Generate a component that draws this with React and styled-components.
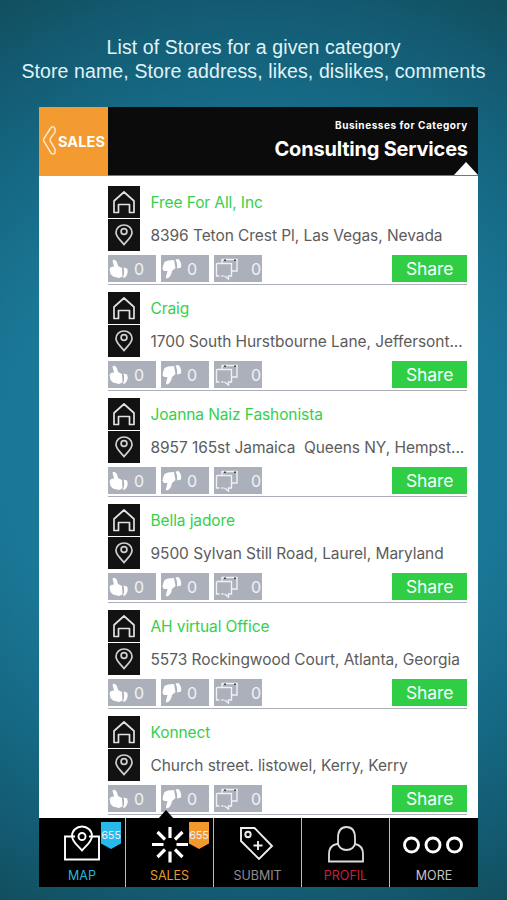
import React from "react";
import styled, { createGlobalStyle } from "styled-components";

const GlobalStyle = createGlobalStyle`
  * { box-sizing: border-box; }
  body { margin: 0; background: #125066; }
`;

const Page = styled.main`
  width: 507px;
  height: 900px;
  overflow: hidden;
  display: flex;
  flex-direction: column;
  align-items: flex-start;
  padding: 35px 0 0 39px;
  background: radial-gradient(circle at 50% 50%, #1b80a0 0px, #1a7897 250px, #166a86 350px, #135a71 450px, #124e5d 520px);
  font-family: Inter, sans-serif;
`;

const Caption = styled.h1`
  width: 507px;
  height: 72px;
  flex: none;
  margin: 0 0 0 -39px;
  color: #e0f3f8;
  font: 400 19.5px/24px "Liberation Sans", sans-serif;
  text-align: center;
`;

const CaptionLine = styled.span`
  display: block;
  white-space: nowrap;
  letter-spacing: ${(p) => p.$spacing}px;
`;

const Phone = styled.section`
  width: 439.400px;
  height: 780px;
  flex: none;
  display: flex;
  flex-direction: column;
  background: #fff;
`;

const Header = styled.header`
  position: relative;
  display: flex;
  height: 69px;
  flex: none;
  background: #0b0b0b;
  border-bottom: 1px solid #777;
`;

const Back = styled.button`
  width: 69px;
  height: 69px;
  display: flex;
  align-items: center;
  gap: 1px;
  padding: 0 0 0 4px;
  border: 0;
  color: #fff;
  background: #f39b30;
  font: 700 14.5px Inter, sans-serif;
  letter-spacing: 0.1px;
`;

const Titles = styled.div`
  flex: 1;
  padding: 11px 10.5px 0 0;
  text-align: right;
  color: #fff;
`;

const Eyebrow = styled.div`
  font-size: 10px;
  line-height: 14px;
  font-weight: 650;
  letter-spacing: 0.55px;
`;

const Title = styled.div`
  margin-top: 5px;
  font-size: 20px;
  line-height: 24px;
  font-weight: 650;
  letter-spacing: -0.2px;
`;

const Notch = styled.svg`
  position: absolute;
  right: 0;
  bottom: 0;
`;

const List = styled.div`
  flex: 1;
  padding: 10px 11px 0 69px;
  min-height: 0;
  overflow: hidden;
`;

const Store = styled.article`
  height: 99px;
  margin-bottom: 7px;
  border-bottom: 1px solid #acafb7;
`;

const Line = styled.div`
  display: flex;
  align-items: center;
  gap: 10.5px;
  height: 32px;
  margin-bottom: 1px;
`;

const Tile = styled.span`
  width: 32px;
  height: 32px;
  flex: none;
  background: #121212;
  display: grid;
  place-items: center;
`;

const Label = styled.span`
  padding-top: 2px;
  font-size: 15.5px;
  line-height: 22px;
  white-space: pre;
  color: ${(p) => (p.$name ? "#35d04b" : "#5c5c5c")};
  letter-spacing: ${(p) => (p.$name ? -0.1 : -0.065)}px;
`;

const Actions = styled.div`
  display: flex;
  gap: 5px;
  margin-top: 4px;
  height: 27px;
`;

const Stat = styled.span`
  width: 48px;
  display: flex;
  align-items: center;
  justify-content: space-between;
  padding-right: ${(p) => p.$end}px;
  background: #acb0ba;
  color: #f2f3f6;
  font-size: 16px;
`;

const Share = styled.button`
  width: 74.500px;
  margin-left: auto;
  margin-right: 0.500px;
  border: 0;
  padding: 0;
  background: #2fce44;
  color: #fff;
  font: 400 17.5px/27px Inter, sans-serif;
  letter-spacing: -0.1px;
`;

const Tabs = styled.nav`
  flex: none;
  height: 69px;
  display: flex;
  background: #000;
`;

const Tab = styled.div`
  position: relative;
  width: ${(p) => p.$width || 88}px;
  display: flex;
  flex-direction: column;
  align-items: center;
  padding-top: 6px;
  color: ${(p) => p.$color};
  border-right: ${(p) => (p.$last ? 0 : 1)}px solid #bbb;
  font-size: 12.5px;
  line-height: 16px;
`;

const TabIcon = styled.svg`
  flex: none;
  margin-bottom: 2px;
`;

const Dots = styled(TabIcon)`
  margin-right: 3px;
`;

const Badge = styled.span`
  position: absolute;
  top: 4px;
  right: 4px;
  width: 20px;
  height: 27px;
  padding-top: 6px;
  text-align: center;
  color: #e9f2f4;
  background: ${(p) => p.$color};
  clip-path: polygon(0 0, 100% 0, 100% 80%, 50% 100%, 0 80%);
  font-size: 11px;
  line-height: 15px;
  letter-spacing: -0.2px;
`;

const Pointer = styled.svg`
  position: absolute;
  top: -8px;
  left: 32px;
`;

const House = () => (
  <svg width="24" height="24" viewBox="0 0 24 24" fill="none" stroke="#e2e2e2" strokeWidth="1.700" strokeLinejoin="round">
    <path d="M2 11 12 2l10 9V22.500h-4.500V14.500H6.500V22.500H2Z" />
  </svg>
);

const Pin = () => (
  <svg width="18" height="22" viewBox="0 0 18 22" fill="none" stroke="#d0d0d0" strokeWidth="1.700">
    <path d="M9 20.500C6 16.500 1 13 1 8.500a8 7.500 0 0 1 16 0C17 13 12 16.500 9 20.500Z" />
    <circle cx="9" cy="7.500" r="2.900" />
  </svg>
);

const ThumbUp = () => (
  <svg width="22" height="22" viewBox="0 0 22 22" fill="#fff">
    <path d="M4.500 2.500C6 .5 8.500 2.500 9 4.500L10 8l4 2 .5 8.500L11 20 5 18.500 2.500 16 1.500 11 3 9l3-.5Z" />
    <path d="m15.500 9.500 3.500 1c1.500 3 .5 6.500-2 9l-2 .5c1.500-4 1.500-7 .5-10.500Z" />
  </svg>
);

const ThumbDown = () => (
  <svg width="22" height="22" viewBox="0 0 22 22" fill="#fff">
    <path d="M2 8 3.500 4 7 2.500l6-.5 1.500 8L11 13c-.5 3.500-2 6.500-5 7.500-2-.5-.5-3 0-5.500l.5-2H3L1.500 11Z" />
    <path d="m14.500 1.500 3-.5c2.500 2.500 3 5.500 2.500 8.500l-4 1c.5-3 0-6-1.500-9Z" />
  </svg>
);

const Comments = () => (
  <svg width="26" height="24" viewBox="0 0 26 24" fill="none" stroke="#f0f1f4" strokeWidth="1.400">
    <path d="M8 6V2.500h15v11.500H18" />
    <path d="M2.500 6.500h15v12.500h-3v3l-4-3" />
    <path d="M2.500 6.500v12.500h3m2 0h2" />
    <path d="M10 3.300h2m8 0h2" stroke="#444" />
  </svg>
);

const icons = {
  map: <><path d="M14 12.500H4v23h34v-23H28" /><path d="M21 26.500c-4-5-10-8.500-10-14.500a10 9.500 0 0 1 20 0c0 6-6 9.500-10 14.500Z" /><circle cx="21" cy="12.500" r="3.500" /></>,
  sales: <path d="M21 3v11M21 27.500v11M3 20.500h11.500M27.500 20.500H39M8.500 8l7.500 7.500M26 25.500l7.500 7.500M33.500 8 26 15.500M16 25.500 8.500 33" />,
  submit: <><path d="M4 4h13.500L35 22 22 35 4 17Z" /><circle cx="11" cy="10.500" r="2.700" /><path d="M21 17v9M16.500 21.500h9" /></>,
  profil: <><path d="M13 20H12c-5 1-8 4.500-8 10v7.500h34V30c0-5.500-3-9-8-10h-1" /><path d="M13 14c0-7 3-11 8.500-11S30 7 30 14v5c0 4-4 7-8.500 7S13 23 13 19Z" /></>,
};

const stores = [
  ["Free For All, Inc", "8396 Teton Crest Pl, Las Vegas, Nevada"],
  ["Craig", "1700 South Hurstbourne Lane, Jeffersont..."],
  ["Joanna Naiz Fashonista", "8957 165st Jamaica  Queens NY, Hempst..."],
  ["Bella jadore", "9500 Sylvan Still Road, Laurel, Maryland"],
  ["AH virtual Office", "5573 Rockingwood Court, Atlanta, Georgia"],
  ["Konnect", "Church street. listowel, Kerry, Kerry"],
];

export default function App() {
  return (
    <Page>
      <GlobalStyle />
      <Caption>
        <CaptionLine $spacing={0.1}>List of Stores for a given category</CaptionLine>
        <CaptionLine $spacing={0.11}>Store name, Store address, likes, dislikes, comments</CaptionLine>
      </Caption>
      <Phone>
        <Header>
          <Back>
            <svg width="14" height="32" viewBox="0 0 14 32" fill="none" stroke="#ffe5c4" strokeWidth="1.500">
              <path d="M8 1.500 1 12.500q-.8 1.500 0 3l7 11.500q2 2 4 0V23L7.500 15.500q-.8-1.500 0-3L12 6V2.500Q10.500-.5 8 1.500Z" />
            </svg>
            SALES
          </Back>
          <Titles>
            <Eyebrow>Businesses for Category</Eyebrow>
            <Title>Consulting Services</Title>
          </Titles>
          <Notch width="24" height="13" viewBox="0 0 24 13"><path d="M0 13 12 0l12 13Z" fill="#fff" /></Notch>
        </Header>
        <List>
          {stores.map(([name, address]) => (
            <Store key={name}>
              <Line><Tile><House /></Tile><Label $name>{name}</Label></Line>
              <Line><Tile><Pin /></Tile><Label>{address}</Label></Line>
              <Actions>
                <Stat $end={12}><ThumbUp />0</Stat>
                <Stat $end={12}><ThumbDown />0</Stat>
                <Stat $end={1}><Comments />0</Stat>
                <Share>Share</Share>
              </Actions>
            </Store>
          ))}
        </List>
        <Tabs>
          <Tab $width={87} $color="#28b5dc"><TabIcon width="42" height="42" fill="none" stroke="#fff" strokeWidth="1.900">{icons.map}</TabIcon>MAP<Badge $color="#27b8ec">655</Badge></Tab>
          <Tab $color="#e99a28"><Pointer width="16" height="9"><path d="m0 9 8-9 8 9Z" /></Pointer><TabIcon width="42" height="42" fill="none" stroke="#fff" strokeWidth="3.200">{icons.sales}</TabIcon>SALES<Badge $color="#f3982b">655</Badge></Tab>
          <Tab $color="#918b90"><TabIcon width="42" height="42" fill="none" stroke="#eee" strokeWidth="1.900">{icons.submit}</TabIcon>SUBMIT</Tab>
          <Tab $color="#c6203b"><TabIcon width="42" height="42" fill="none" stroke="#ddd" strokeWidth="1.800">{icons.profil}</TabIcon>PROFIL</Tab>
          <Tab $color="#c5c5c5" $last><Dots width="64" height="42" fill="none" stroke="#fff" strokeWidth="2.900"><circle cx="10.500" cy="21" r="7" /><circle cx="32" cy="21" r="7" /><circle cx="53.500" cy="21" r="7" /></Dots>MORE</Tab>
        </Tabs>
      </Phone>
    </Page>
  );
}
